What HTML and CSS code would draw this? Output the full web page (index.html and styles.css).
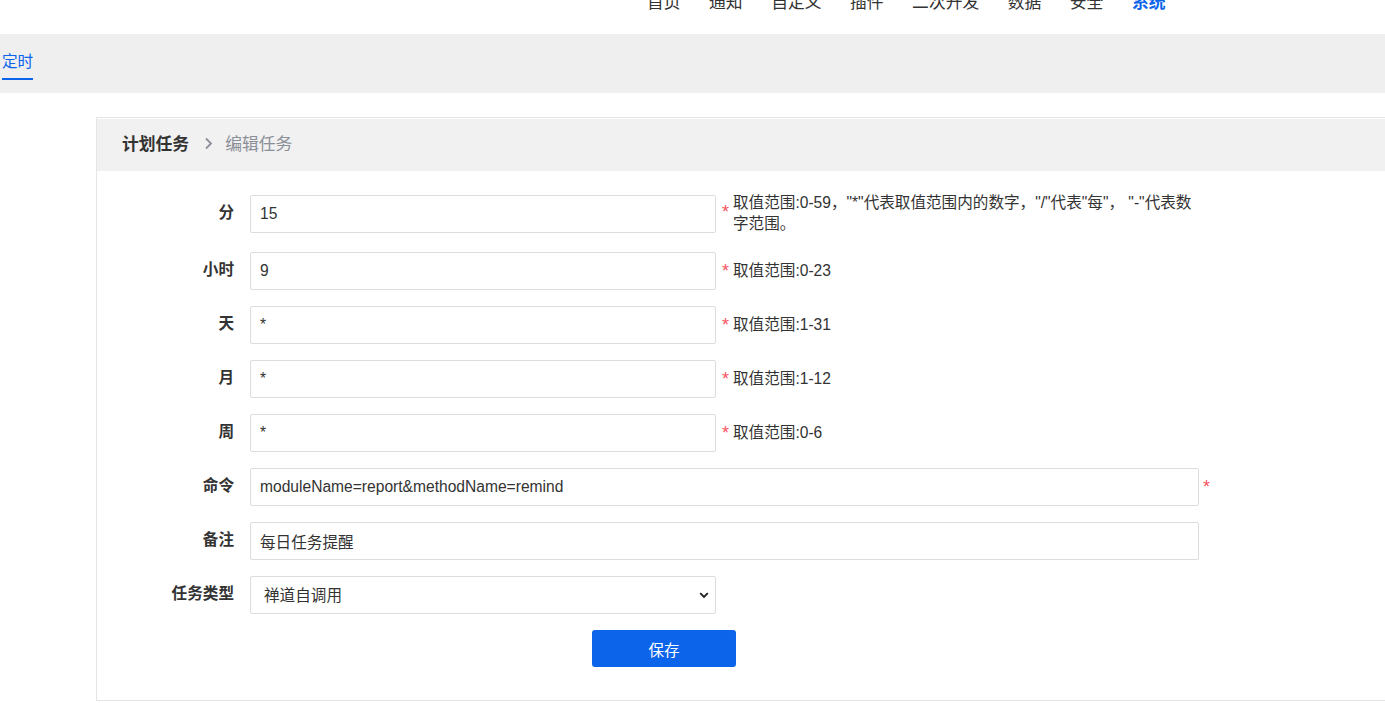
FILE: index.html
```
<!DOCTYPE html>
<html lang="zh-CN">
<head>
<meta charset="utf-8">
<title>编辑任务</title>
<link rel="stylesheet" href="styles.css">
</head>
<body>
<header class="topbar">
  <nav class="mainnav">
    <a class="nav-item">首页</a>
    <a class="nav-item">通知</a>
    <a class="nav-item">自定义</a>
    <a class="nav-item">插件</a>
    <a class="nav-item">二次开发</a>
    <a class="nav-item">数据</a>
    <a class="nav-item">安全</a>
    <a class="nav-item active">系统</a>
  </nav>
</header>
<div class="subbar">
  <a class="subtab">定时</a>
</div>
<main class="panel">
  <div class="panel-head">
    <span class="crumb-main">计划任务</span>
    <svg class="crumb-sep" width="9" height="13" viewBox="0 0 9 13"><path d="M2 1.5 L7 6.5 L2 11.5" fill="none" stroke="#8b8f98" stroke-width="1.8"/></svg>
    <span class="crumb-sub">编辑任务</span>
  </div>
  <form class="form">
    <label class="lbl">分</label>
    <div class="field">
      <input class="inp" type="text" value="15">
      <span class="req req-top">*</span>
      <span class="help help-multi">取值范围:0-59，"*"代表取值范围内的数字，"/"代表"每"， "-"代表数字范围。</span>
    </div>
    <label class="lbl">小时</label>
    <div class="field">
      <input class="inp" type="text" value="9">
      <span class="req">*</span>
      <span class="help">取值范围:0-23</span>
    </div>
    <label class="lbl">天</label>
    <div class="field">
      <input class="inp" type="text" value="*">
      <span class="req">*</span>
      <span class="help">取值范围:1-31</span>
    </div>
    <label class="lbl">月</label>
    <div class="field">
      <input class="inp" type="text" value="*">
      <span class="req">*</span>
      <span class="help">取值范围:1-12</span>
    </div>
    <label class="lbl">周</label>
    <div class="field">
      <input class="inp" type="text" value="*">
      <span class="req">*</span>
      <span class="help">取值范围:0-6</span>
    </div>
    <label class="lbl">命令</label>
    <div class="field">
      <input class="inp wide" type="text" value="moduleName=report&amp;methodName=remind">
      <span class="req req-wide">*</span>
    </div>
    <label class="lbl">备注</label>
    <div class="field">
      <input class="inp wide" type="text" value="每日任务提醒">
    </div>
    <label class="lbl">任务类型</label>
    <div class="field">
      <div class="select-wrap">
        <select class="sel">
          <option>禅道自调用</option>
        </select>
        <svg class="sel-arrow" width="10" height="7" viewBox="0 0 10 7"><path d="M1.2 1.2 L5 5 L8.8 1.2" fill="none" stroke="#222" stroke-width="1.9"/></svg>
      </div>
    </div>
    <div class="actions">
      <button class="btn" type="button">保存</button>
    </div>
  </form>
</main>
</body>
</html>
```
FILE: styles.css
```
* { box-sizing: border-box; }
html, body {
  margin: 0;
  padding: 0;
  background: #fff;
  overflow: hidden;
}
body {
  font-family: "Liberation Sans", "Noto Sans CJK SC", sans-serif;
  font-size: 15.6px;
  color: #333;
}
.topbar {
  height: 34px;
  overflow: hidden;
  background: #fff;
}
.mainnav {
  display: flex;
  gap: 28.5px;
  padding-left: 647px;
  margin-top: -7px;
}
.nav-item {
  font-size: 16.8px;
  line-height: 20px;
  color: #333;
  text-decoration: none;
  white-space: nowrap;
}
.nav-item.active {
  color: #0c64eb;
  font-weight: bold;
}
.subbar {
  height: 59px;
  background: #efefef;
  padding-top: 18px;
  padding-left: 2px;
}
.subtab {
  display: inline-block;
  font-size: 15.6px;
  line-height: 20px;
  color: #0c64eb;
  padding-bottom: 6px;
  border-bottom: 2px solid #0c64eb;
}
.panel {
  margin: 24px 0 0 96px;
  border-top: 1px solid #e5e5e5;
  border-left: 1px solid #e5e5e5;
  border-bottom: 1px solid #e5e5e5;
}
.panel-head {
  height: 53px;
  background: #f1f1f1;
  border-top: 1px solid #fff;
  display: flex;
  align-items: center;
  padding-left: 25px;
  padding-bottom: 4px;
  font-size: 16.8px;
}
.crumb-main {
  font-weight: bold;
  color: #333;
}
.crumb-sep {
  margin-left: 15px;
  margin-right: 12px;
}
.crumb-sub {
  color: #8b8f98;
}
.form {
  width: 1134px;
  display: grid;
  grid-template-columns: 137px 1fr;
  column-gap: 16px;
  row-gap: 16px;
  padding: 24px 0 33px;
}
.lbl {
  display: block;
  text-align: right;
  line-height: 36px;
  font-weight: bold;
  color: #333;
}
.field {
  display: flex;
  align-items: center;
}
.inp {
  width: 466px;
  height: 38px;
  border: 1px solid #ddd;
  border-radius: 2px;
  padding: 0 9px;
  font-family: inherit;
  font-size: 15.6px;
  color: #333;
  background: #fff;
  outline: none;
  flex: none;
  align-self: flex-start;
}
.inp.wide {
  width: 949px;
}
.req {
  color: #f5545f;
  font-size: 18px;
  margin-left: 6px;
  width: 11px;
  flex: none;
  line-height: 20px;
}
.req-top {
  align-self: flex-start;
  margin-top: 6.5px;
}
.req-wide {
  margin-left: 4px;
}
.help {
  width: 466px;
  line-height: 20.5px;
  color: #333;
}
.help-multi {
  margin: -2px 0 2px;
}
.select-wrap {
  position: relative;
  width: 466px;
  height: 38px;
}
.sel {
  appearance: none;
  -webkit-appearance: none;
  width: 100%;
  height: 100%;
  border: 1px solid #ddd;
  border-radius: 2px;
  padding: 0 13px;
  font-family: inherit;
  font-size: 15.6px;
  color: #333;
  background: #fff;
  outline: none;
}
.sel-arrow {
  position: absolute;
  right: 7px;
  top: 16px;
}
.actions {
  grid-column: 1 / span 2;
  display: flex;
  justify-content: center;
}
.btn {
  width: 144px;
  height: 37px;
  border: none;
  border-radius: 3px;
  background: #0c64eb;
  color: #fff;
  font-family: inherit;
  font-size: 15.6px;
}
```
